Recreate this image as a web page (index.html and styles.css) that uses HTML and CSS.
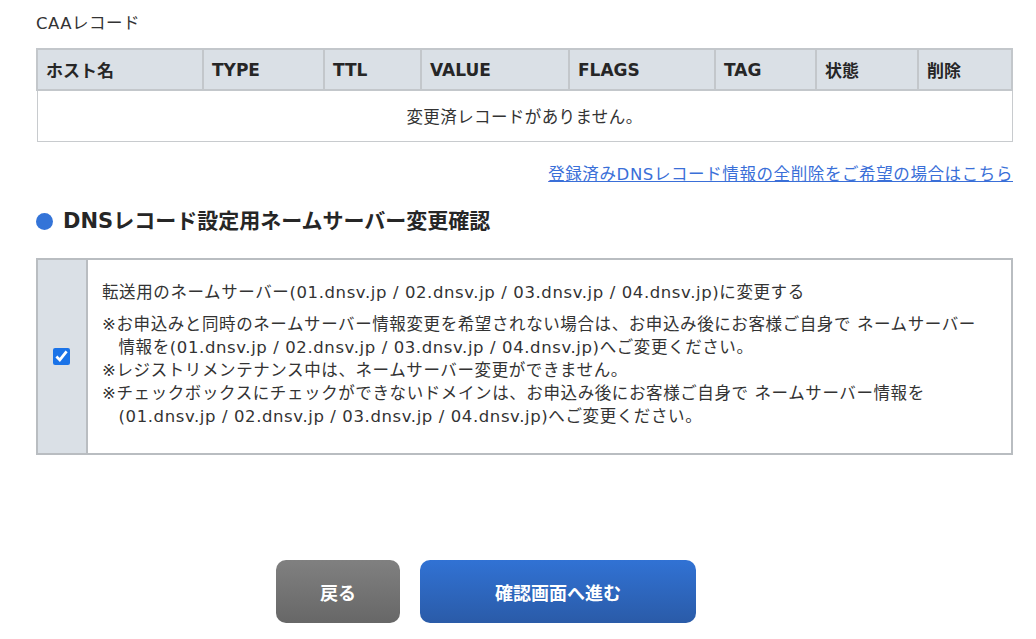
FILE: index.html
```html
<!DOCTYPE html>
<html lang="ja">
  <head>
    <meta charset="UTF-8" />
    <title>DNSレコード設定</title>
    <link rel="stylesheet" href="styles.css">
  </head>
  <body>
    <div class="main">
      <p class="record-title">CAAレコード</p>
      <table class="record-table">
        <colgroup>
          <col style="width: 166px">
          <col style="width: 121px">
          <col style="width: 97px">
          <col style="width: 148px">
          <col style="width: 146px">
          <col style="width: 101px">
          <col style="width: 102px">
          <col>
        </colgroup>
        <thead>
          <tr>
            <th>ホスト名</th>
            <th>TYPE</th>
            <th>TTL</th>
            <th>VALUE</th>
            <th>FLAGS</th>
            <th>TAG</th>
            <th>状態</th>
            <th>削除</th>
          </tr>
        </thead>
        <tbody>
          <tr>
            <td colspan="8" class="empty">変更済レコードがありません。</td>
          </tr>
        </tbody>
      </table>

      <div class="delete-link">
        <a href="#">登録済みDNSレコード情報の全削除をご希望の場合はこちら</a>
      </div>

      <h2 class="section-title">DNSレコード設定用ネームサーバー変更確認</h2>

      <div class="ns-box">
        <div class="ns-check">
          <input type="checkbox" checked />
        </div>
        <div class="ns-body">
          <p class="ns-label">転送用のネームサーバー(01.dnsv.jp / 02.dnsv.jp / 03.dnsv.jp / 04.dnsv.jp)に変更する</p>
          <ul class="notes">
            <li>※お申込みと同時のネームサーバー情報変更を希望されない場合は、お申込み後にお客様ご自身で ネームサーバー<br>情報を(01.dnsv.jp / 02.dnsv.jp / 03.dnsv.jp / 04.dnsv.jp)へご変更ください。</li>
            <li>※レジストリメンテナンス中は、ネームサーバー変更ができません。</li>
            <li>※チェックボックスにチェックができないドメインは、お申込み後にお客様ご自身で ネームサーバー情報を<br>(01.dnsv.jp / 02.dnsv.jp / 03.dnsv.jp / 04.dnsv.jp)へご変更ください。</li>
          </ul>
        </div>
      </div>

      <div class="buttons">
        <button type="button" class="button back">戻る</button>
        <button type="button" class="button next">確認画面へ進む</button>
      </div>
    </div>
  </body>
</html>
```

FILE: styles.css
```css
body {
  margin: 0;
  background: #fff;
  color: #333;
  font-family: "DejaVu Sans", "Noto Sans CJK JP", sans-serif;
  font-size: 16px;
}

.main {
  width: 977px;
  margin-left: 36px;
  padding-top: 12px;
}

.record-title {
  margin: 0 0 12px;
  font-size: 16.5px;
  line-height: 24px;
  letter-spacing: 0.5px;
}

.record-table {
  width: 100%;
  border-collapse: collapse;
  table-layout: fixed;
}

.record-table th {
  height: 39px;
  padding: 0 8px;
  background-color: #dae0e6;
  border: 2px solid #c3c7cb;
  text-align: left;
  font-size: 17px;
  font-weight: bold;
  color: #262626;
}

.record-table td {
  height: 48px;
  border: 1px solid #c8cbce;
  border-top: 2px solid #c3c7cb;
  font-size: 16.5px;
  letter-spacing: 0.4px;
}

.empty {
  text-align: center;
}

.delete-link {
  margin-top: 21px;
  text-align: right;
  line-height: 24px;
  font-size: 16.5px;
  letter-spacing: 0.6px;
}

.delete-link a {
  color: #3a6fd8;
}

.section-title {
  display: flex;
  align-items: center;
  gap: 10px;
  margin: 19px 0 22px;
  font-size: 21px;
  line-height: 30px;
  color: #262626;
}

.section-title::before {
  content: "";
  width: 17px;
  height: 17px;
  border-radius: 50%;
  background-color: #3474d8;
}

.ns-box {
  display: flex;
  border: 2px solid #b9bdc1;
}

.ns-check {
  width: 48px;
  flex-shrink: 0;
  display: flex;
  align-items: center;
  justify-content: center;
  background-color: #dae0e6;
  border-right: 2px solid #b9bdc1;
}

.ns-check input {
  width: 17px;
  height: 17px;
  margin: 0 0 0 -2px;
  accent-color: #1a73e8;
}

.ns-body {
  padding: 21px 8px 25px 14px;
  font-size: 16.5px;
  letter-spacing: 0.6px;
}

.ns-label {
  margin: 0 0 8px;
  line-height: 24px;
}

.notes {
  margin: 0;
  padding: 0;
  list-style: none;
  line-height: 23px;
}

.notes li {
  padding-left: 1em;
  text-indent: -1em;
}

.buttons {
  display: flex;
  gap: 20px;
  margin-top: 105px;
  padding-left: 240px;
}

.button {
  height: 63px;
  border: none;
  border-radius: 10px;
  color: white;
  font-family: inherit;
  font-size: 18px;
  font-weight: bold;
  cursor: pointer;
}

.back {
  width: 124px;
  background: linear-gradient(#808080, #676767);
}

.next {
  width: 276px;
  background: linear-gradient(#3172d4, #2a5ba8);
}
```
